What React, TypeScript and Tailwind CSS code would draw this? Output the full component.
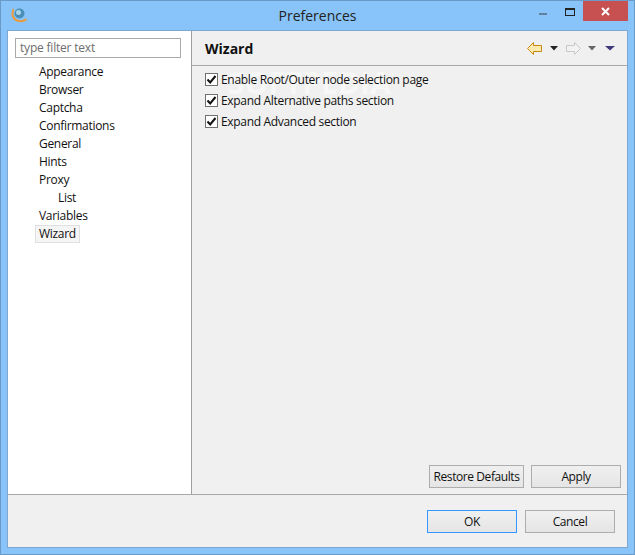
import React from "react";

const tree: [string, boolean?][] = [
  ["Appearance"], ["Browser"], ["Captcha"], ["Confirmations"], ["General"], ["Hints"], ["Proxy"], ["List", true], ["Variables"],
];

function Check({ label }: { label: string }) {
  return (
    <div className="flex items-center h-[21px] gap-[3px]">
      <span className="w-[13px] h-[13px] border border-[#707070] bg-white flex items-center justify-center">
        <svg width="11" height="11" viewBox="0 0 11 11"><path d="M1.5 5.5 L4.2 8.5 L9.5 2" fill="none" stroke="#111" strokeWidth="2" /></svg>
      </span>
      <span className="text-[12px] tracking-[-0.32px] text-[#111]">{label}</span>
    </div>
  );
}

function Btn({ label, w, primary }: { label: string; w: string; primary?: boolean }) {
  return (
    <button className={`${w} h-[23px] border ${primary ? "border-[#3399ff]" : "border-[#adadad]"} bg-gradient-to-b from-[#f0f0f0] to-[#e5e5e5] text-[12px] tracking-[-0.42px] text-[#111] flex items-center justify-center`}>
      {label}
    </button>
  );
}

function Arrow({ flip, muted }: { flip?: boolean; muted?: boolean }) {
  return (
    <svg width="15" height="13" viewBox="0 0 15 13" className={flip ? "-scale-x-100" : ""}>
      <path d="M0.5 6.5 L6.5 0.5 V3.5 H14.5 V9.5 H6.5 V12.5 Z" fill={muted ? "#f2f2f2" : "#ffeab0"} stroke={muted ? "#c8c8c8" : "#c98a10"} />
    </svg>
  );
}

function Tri({ color, w = 8 }: { color: string; w?: number }) {
  return <svg width={w} height="5" viewBox="0 0 8 5" preserveAspectRatio="none"><path d="M0 0 H8 L4 4.5 Z" fill={color} /></svg>;
}

export default function App() {
  return (
    <div className="w-[635px] h-[555px] bg-[#88c4f9] border border-[#6b9ac6] flex flex-col font-['Open_Sans','Noto_Sans',sans-serif] overflow-hidden">
      <div className="h-[29px] grid grid-cols-[1fr_auto_1fr] shrink-0">
        <div className="flex items-center pl-[10px] pb-[1px]">
          <svg width="16" height="16" viewBox="0 0 16 16">
            <path d="M2.5 2 C0.5 7 1.5 12 6 13.5 C9 14.5 13 14 15.5 12" fill="none" stroke="#ec9a3c" strokeWidth="2" />
            <circle cx="8.5" cy="6.5" r="5" fill="#4a8fb8" />
            <circle cx="7.5" cy="5.5" r="2.5" fill="#a8d4e8" />
          </svg>
        </div>
        <div className="text-[14px] text-[#222] flex items-center">Preferences</div>
        <div className="flex justify-end items-start pr-[6px]">
          <div className="w-[8px] h-[2px] bg-[#5f7f9e] mt-[12px] mr-[18px]" />
          <div className="w-[10px] h-[8px] border border-[#222] border-t-2 mt-[7px] mr-[8px]" />
          <div className="w-[45px] h-[20px] bg-[#c75050] flex items-center justify-center">
            <svg width="9" height="9" viewBox="0 0 9 9"><path d="M1 1 L8 8 M8 1 L1 8" stroke="#fff" strokeWidth="2" /></svg>
          </div>
        </div>
      </div>

      <div className="flex-1 mx-[6px] mb-[6px] border border-[#7da7cf] bg-[#f0f0f0] flex flex-col">
        <div className="flex-1 flex min-h-0">
          <div className="w-[184px] bg-white border-r border-[#a0a0a0] shrink-0 pt-[7px] pl-[7px] pr-[10px]">
            <div className="h-[20px] border border-[#a9a9a9] flex items-center pl-[4px] text-[12px] tracking-[-0.2px] text-[#6d6d6d]">type filter text</div>
            <div className="pt-[5px] text-[12px] tracking-[-0.3px] text-[#111]">
              {tree.map(([t, sub]) => (
                <div key={t} className={`h-[18px] flex items-center ${sub ? "pl-[43px]" : "pl-[24px]"}`}>{t}</div>
              ))}
              <div className="h-[18px] flex items-center pl-[20px]">
                <span className="h-[18px] px-[3px] border border-[#e0e0e0] bg-[#f5f5f5] flex items-center">Wizard</span>
              </div>
            </div>
          </div>

          <div className="flex-1 flex flex-col relative">
            <div className="absolute left-[36px] top-[37px] text-[30px] leading-none font-bold text-white/50 pointer-events-none">SOFTPEDIA</div>
            <div className="relative h-[35px] border-b border-[#a8a8a8] flex items-center pl-[13px] pr-[12px]">
              <span className="text-[14px] font-bold text-[#111] flex-1">Wizard</span>
              <Arrow />
              <span className="w-[8px]" />
              <Tri color="#222" />
              <span className="w-[8px]" />
              <Arrow flip muted />
              <span className="w-[7px]" />
              <Tri color="#666" />
              <span className="w-[9px]" />
              <Tri color="#3f3a7a" w={10} />
            </div>
            <div className="relative flex-1 flex flex-col pl-[13px] pt-[3px]">
              <Check label="Enable Root/Outer node selection page" />
              <Check label="Expand Alternative paths section" />
              <Check label="Expand Advanced section" />
              <div className="flex-1" />
              <div className="flex justify-end gap-[7px] pr-[6px] pb-[6px]">
                <Btn label="Restore Defaults" w="w-[95px]" />
                <Btn label="Apply" w="w-[90px]" />
              </div>
            </div>
          </div>
        </div>
        <div className="h-[53px] border-t border-[#a8a8a8] flex justify-end items-start gap-[8px] pt-[15px] pr-[12px] shrink-0">
          <Btn label="OK" w="w-[90px]" primary />
          <Btn label="Cancel" w="w-[90px]" />
        </div>
      </div>
    </div>
  );
}
